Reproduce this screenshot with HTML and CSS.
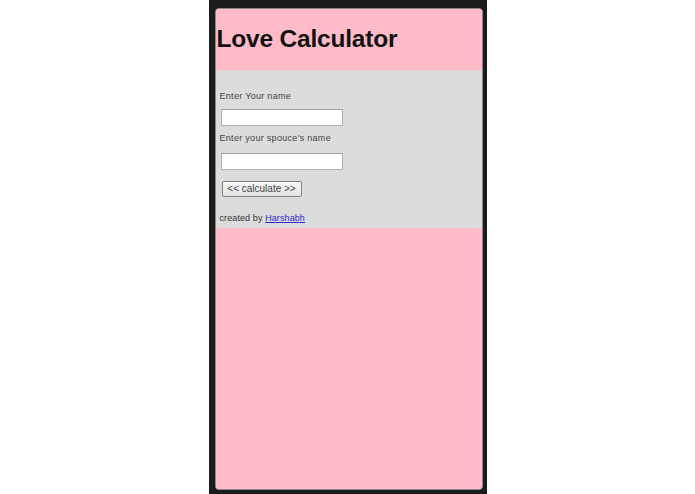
FILE: index.html
```html
<!DOCTYPE html>
<html>
<head>
<meta charset="utf-8">
<title>Love Calculator</title>
<link rel="stylesheet" href="styles.css">
</head>
<body>
<div class="stage">
  <div class="phone">
    <div class="screen">
      <header class="head">
        <h1 class="title">Love Calculator</h1>
      </header>
      <form class="form">
        <div class="label first">Enter Your name</div>
        <input class="field" type="text">
        <div class="label second">Enter your spouce's name</div>
        <input class="field field2" type="text">
        <div class="btnrow"><button class="btn" type="button">&lt;&lt; calculate &gt;&gt;</button></div>
        <div class="credit">created by <a href="#" class="link">Harshabh</a></div>
      </form>
      <div class="rest"></div>
    </div>
  </div>
</div>
</body>
</html>
```

FILE: styles.css
```css
html, body {
  margin: 0;
  padding: 0;
  background: #ffffff;
  height: 100%;
}
.stage {
  display: flex;
  justify-content: center;
  height: 494px;
}
.phone {
  width: 278px;
  height: 494px;
  background: #1c1c1c;
  box-sizing: border-box;
  padding: 8px 4px 4px 6px;
  display: flex;
}
.screen {
  flex: 1;
  border: 1px solid #8a8a8a;
  border-radius: 4px;
  overflow: hidden;
  display: flex;
  flex-direction: column;
  background: #ffbbc7;
}
.head {
  height: 61px;
  background: #ffbbc7;
  display: flex;
  align-items: center;
}
.title {
  margin: 0 0 0 1px;
  font-family: "Liberation Sans", Arial, sans-serif;
  font-weight: bold;
  font-size: 24.5px;
  color: #111;
  letter-spacing: -0.2px;
  position: relative;
  top: -1px;
}
.form {
  background: #dcdcdc;
  padding: 21px 0 4px 4px;
  font-family: "Liberation Sans", Arial, sans-serif;
  display: flex;
  flex-direction: column;
  align-items: flex-start;
}
.label {
  font-size: 9px;
  line-height: 11px;
  color: #444;
  letter-spacing: 0.3px;
}
.second {
  margin-top: 7px;
}
.field {
  margin: 7px 0 0 1px;
  width: 122px;
  height: 17px;
  box-sizing: border-box;
  border: 1px solid #b0b0b0;
  border-top-color: #a0a0a0;
  background: #fff;
  padding: 0;
}
.field2 {
  margin-top: 9px;
}
.btnrow {
  margin-top: 8px;
  margin-left: 2px;
}
.btn {
  width: 80px;
  height: 16px;
  box-sizing: border-box;
  padding: 0;
  border: 1px solid #808080;
  border-radius: 2px;
  background: linear-gradient(#f8f8f8, #e4e4e4);
  font-family: "Liberation Sans", Arial, sans-serif;
  font-size: 10px;
  line-height: 14px;
  color: #444;
}
.credit {
  margin-top: 16px;
  font-size: 9px;
  line-height: 11px;
  color: #333;
  letter-spacing: 0.1px;
}
.link {
  color: #2a2ad0;
  text-decoration: underline;
}
.rest {
  flex: 1;
  background: #ffbbc7;
}
```
